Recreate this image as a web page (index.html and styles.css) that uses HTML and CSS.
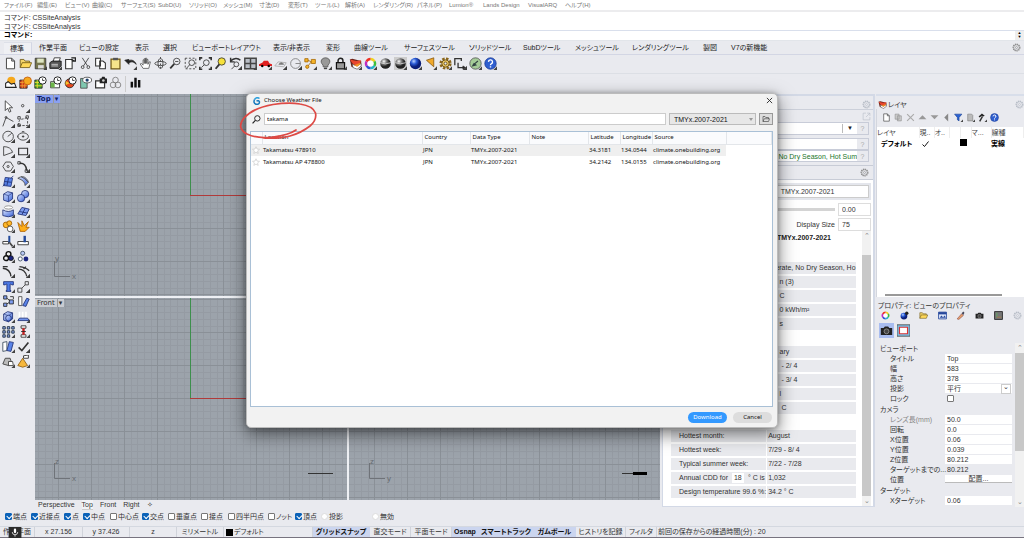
FILE: index.html
```html
<!DOCTYPE html>
<html lang="ja">
<head>
<meta charset="utf-8">
<title>Choose Weather File</title>
<link rel="stylesheet" href="styles.css">
</head>
<body>
<svg class="defs" aria-hidden="true">
  <defs>
    <radialGradient id="ball" cx=".35" cy=".3"><stop offset="0" stop-color="#fff"/><stop offset=".45" stop-color="#888"/><stop offset="1" stop-color="#222"/></radialGradient>
    <radialGradient id="blueball" cx=".35" cy=".3"><stop offset="0" stop-color="#bcd4ff"/><stop offset=".5" stop-color="#2a5bd6"/><stop offset="1" stop-color="#0a1e78"/></radialGradient>
    <linearGradient id="bluebox" x2="1" y2="1"><stop offset="0" stop-color="#dbe6ff"/><stop offset="1" stop-color="#3b63d8"/></linearGradient>
    <symbol id="tri" viewBox="0 0 16 16"><path d="M16 11.500V16H11.500z" fill="#444"/></symbol>
    <symbol id="page" viewBox="0 0 16 16"><path d="M3 1.500h6.500l3.500 3.500v9.500H3zM9.500 1.500V5H13" fill="#fff" stroke="#444" stroke-width="1.200"/></symbol>
    <symbol id="folder" viewBox="0 0 16 16"><path d="M1.500 13V3h4.500l1.500 2H13v2" fill="#f3d46a" stroke="#6d5613"/><path d="M1.500 13L4 7h11.500L13 13z" fill="#ffd95a" stroke="#6d5613"/></symbol>
    <symbol id="gear" viewBox="0 0 16 16"><circle cx="8" cy="8" r="6" fill="none" stroke="currentColor" stroke-width="2" stroke-dasharray="2.300 1.200"/><circle cx="8" cy="8" r="4.800" fill="none" stroke="currentColor"/><circle cx="8" cy="8" r="1.800" fill="none" stroke="currentColor"/></symbol>
    <symbol id="layer" viewBox="0 0 16 16"><path d="M1 3l3-1 11 3v6l-5 4-7-3z" fill="#6b2218"/><path d="M1 3l8 2 6-1-2 5-7 1z" fill="#e8452c"/><path d="M4 9l6 2 5-3v3l-5 4-5-2z" fill="#fff" stroke="#444" stroke-width=".7"/><path d="M6 10l8-3v2l-4 3z" fill="#f39224"/></symbol>
    <symbol id="help" viewBox="0 0 16 16"><circle cx="8" cy="8" r="7" fill="#2f5fd0" stroke="#1a3a96"/><path d="M5.500 6a2.500 2.500 0 1 1 3.500 2.300c-.8.500-1 .9-1 1.700M8 11.500v1.500" fill="none" stroke="#fff" stroke-width="1.700"/></symbol>
    <symbol id="camera" viewBox="0 0 16 16"><path d="M1 5h3.500L6 3h4l1.500 2H15v8.500H1z" fill="#222"/><circle cx="8" cy="9" r="3" fill="#444" stroke="#999"/></symbol>
    <symbol id="wheel" viewBox="0 0 16 16"><g fill="none" stroke-width="3"><path d="M8 2.500A5.500 5.500 0 0 1 12.800 5.300" stroke="#f1d21f"/><path d="M12.800 5.300a5.500 5.500 0 0 1 0 5.500" stroke="#3cbf3c"/><path d="M12.800 10.800A5.500 5.500 0 0 1 8 13.500" stroke="#25b5c9"/><path d="M8 13.500a5.500 5.500 0 0 1-4.800-2.700" stroke="#2a4fd8"/><path d="M3.200 10.800a5.500 5.500 0 0 1 0-5.500" stroke="#c22ac0"/><path d="M3.200 5.300A5.500 5.500 0 0 1 8 2.500" stroke="#ee3024"/></g><circle cx="8" cy="8" r="3.500" fill="#fff"/></symbol>
    <symbol id="clock" viewBox="0 0 16 16"><circle cx="10.500" cy="5.500" r="4.500" fill="#fff" stroke="#222" stroke-width="1.200"/><path d="M10.500 3v2.500H13" fill="none" stroke="#222"/></symbol>
    <symbol id="cube" viewBox="0 0 16 16"><path d="M2 5l5-3 6 1.500V11l-5 3.500-6-2z" fill="url(#bluebox)" stroke="#1b2c73"/><path d="M2 5l6 2 5-3.500M8 7v7.500" fill="none" stroke="#1b2c73" stroke-width=".7"/></symbol>
    <symbol id="star" viewBox="0 0 16 16"><path d="M8 1.500l2 4.600 5 .5-3.800 3.300 1.200 4.900L8 12.200l-4.400 2.600 1.200-4.900L1 6.600l5-.5z" fill="#fff" stroke="#b8b8b8"/></symbol>
  </defs>
</svg>

<nav class="menu" aria-label="メインメニュー">
  <a href="#">ファイル(F)</a><a href="#">編集(E)</a><a href="#">ビュー(V)</a><a href="#">曲線(C)</a><a href="#">サーフェス(S)</a><a href="#">SubD(U)</a><a href="#">ソリッド(O)</a><a href="#">メッシュ(M)</a><a href="#">寸法(D)</a><a href="#">変形(T)</a><a href="#">ツール(L)</a><a href="#">解析(A)</a><a href="#">レンダリング(R)</a><a href="#">パネル(P)</a><a href="#">Lumion®</a><a href="#">Lands Design</a><a href="#">VisualARQ</a><a href="#">ヘルプ(H)</a>
</nav>

<section class="command">
  <div class="history"><p>コマンド: CSSiteAnalysis</p><p>コマンド: CSSiteAnalysis</p></div>
  <div class="prompt"><label for="cmd">コマンド:</label><input id="cmd" type="text"><span class="spin">▲<br>▼</span></div>
</section>

<div class="tabs">
  <a href="#" class="on">標準</a><a href="#">作業平面</a><a href="#">ビューの設定</a><a href="#">表示</a><a href="#">選択</a><a href="#">ビューポートレイアウト</a><a href="#">表示/非表示</a><a href="#">変形</a><a href="#">曲線ツール</a><a href="#">サーフェスツール</a><a href="#">ソリッドツール</a><a href="#">SubDツール</a><a href="#">メッシュツール</a><a href="#">レンダリングツール</a><a href="#">製図</a><a href="#">V7の新機能</a>
  <svg class="ic gear"><use href="#gear"/></svg>
</div>

<div class="bar">
  <svg class="ic"><use href="#page"/></svg>
  <svg class="ic"><use href="#folder"/></svg>
  <svg class="ic" viewBox="0 0 16 16"><path d="M1.500 1.500h13v13h-13z" fill="#77774f" stroke="#333"/><path d="M4 2h8v5H4z" fill="#dfe6c4"/><path d="M5 10h7v4H5z" fill="#ddd"/><use href="#tri"/></svg>
  <svg class="ic" viewBox="0 0 16 16"><path d="M5 6l1.500-5H14l-2 5" fill="#fff" stroke="#222"/><path d="M1 7l3-2h11v6l-3 3H1z" fill="#555" stroke="#111"/><path d="M3 11h8M3 9h8" stroke="#ddd"/><use href="#tri"/></svg>
  <svg class="ic" viewBox="0 0 16 16"><path d="M2 3h8v11.500H2z" fill="#fff" stroke="#333" stroke-width="1.300"/><path d="M9 1h5v4h-4M9 3l4 2" fill="none" stroke="#222" stroke-width="1.500"/></svg>
  <svg class="ic k" viewBox="0 0 16 16"><path d="M4 1l6.500 10M12 1L5.500 11"/><circle cx="4.500" cy="12.500" r="1.700"/><circle cx="11.500" cy="12.500" r="1.700"/></svg>
  <svg class="ic" viewBox="0 0 16 16"><path d="M2 1.500h6V11H2zM7 5h4l3 2.500v7H7z" fill="#fff" stroke="#333" stroke-width="1.300"/></svg>
  <svg class="ic" viewBox="0 0 16 16"><path d="M2.500 2.500h11v12h-11z" fill="#f6e48a" stroke="#6d5613" stroke-width="1.500"/><path d="M5 1h6v3H5z" fill="#555"/></svg>
  <svg class="ic" viewBox="0 0 16 16"><path d="M1 4l5 5V7c4-2 6-1 9 2-2-5-6-6-9-4.500V3z" fill="#222" stroke="#222"/><use href="#tri"/></svg>
  <svg class="ic" viewBox="0 0 16 16"><path d="M5 14L1.500 8.500l1.500-.5 2 2V3.500h1.500V8 2H8v6-6.500h1.500V8 3H11v6l1.500-3h1.500L12 14z" fill="#fff" stroke="#555"/></svg>
  <svg class="ic k" viewBox="0 0 16 16"><ellipse cx="8" cy="8" rx="3" ry="6"/><ellipse cx="8" cy="8" rx="7" ry="2.500"/><path d="M8 0v16" stroke-dasharray="2 2"/></svg>
  <svg class="ic k" viewBox="0 0 16 16"><circle cx="9.500" cy="5.500" r="4"/><path d="M6.500 8.500L1.500 14" stroke-width="2.200"/><path d="M7.500 5.500h4"/></svg>
  <svg class="ic k" viewBox="0 0 16 16"><path d="M1.500 1.500h13v13h-13z" stroke-dasharray="2.500 2"/><circle cx="9.500" cy="7" r="3.500"/><path d="M7 9.500L3 14"/></svg>
  <svg class="ic k" viewBox="0 0 16 16"><path d="M1 4V1h3M12 1h3v3M15 12v3h-3M4 15H1v-3" stroke-width="2"/><circle cx="9" cy="7" r="3.500"/><path d="M6.500 9.500L3 13"/></svg>
  <svg class="ic" viewBox="0 0 16 16"><circle cx="9.500" cy="5.500" r="4.500" fill="#f6e13c" stroke="#333"/><path d="M6.500 9L2 14.500" stroke="#333" stroke-width="2.200"/></svg>
  <svg class="ic k" viewBox="0 0 16 16"><path d="M2 1v5h5M2 5c4-4 9-4 12-1" stroke-width="1.800"/><circle cx="9" cy="9" r="3"/><path d="M7 11l-4 4"/><use href="#tri"/></svg>
  <svg class="ic" viewBox="0 0 16 16"><path d="M1 1.500h14v13H1zM8 1v14M1 8h14" stroke="#444" stroke-width="1.800" fill="#b9bec6"/><use href="#tri"/></svg>
  <svg class="ic" viewBox="0 0 16 16"><path d="M0 9l4-2 2-2.500h5L13 8l3 1v2H0z" fill="#e02020"/><circle cx="4" cy="11" r="1.500"/><circle cx="12" cy="11" r="1.500"/><use href="#tri"/></svg>
  <svg class="ic k" viewBox="0 0 16 16"><path d="M1 11l4-5 10 1-3 5z" stroke="#aaa"/><path d="M6 9q3-4 6 0z" fill="#777" stroke="#777"/><use href="#tri"/></svg>
  <svg class="ic k" viewBox="0 0 16 16"><circle cx="8" cy="8" r="6" stroke="#777"/><path d="M8 8h6" stroke="#777"/><use href="#tri"/></svg>
  <svg class="ic" viewBox="0 0 16 16"><path d="M1 2h4v4H1zM9 3h5v5H9z" fill="#f5b429" stroke="#a76a08"/><path d="M5 4l4 2-5 6" stroke="#a76a08" fill="none"/><circle cx="4" cy="12" r="2" fill="#f5b429" stroke="#a76a08"/><use href="#tri"/></svg>
  <svg class="ic" viewBox="0 0 16 16"><path d="M5 10C0 5 4 1 8 1s8 4 3 9v2H5z" fill="#999" stroke="#555"/><path d="M6 13h4v2H6z" fill="#444"/><use href="#tri"/></svg>
  <svg class="ic" viewBox="0 0 16 16"><path d="M5 7V4.500a3 3 0 0 1 6 0V7" fill="none" stroke="#222" stroke-width="1.800"/><path d="M3 7h10v7.500H3z" fill="#999" stroke="#111" stroke-width="1.500"/><use href="#tri"/></svg>
  <svg class="ic" viewBox="0 0 16 16"><use href="#layer"/><use href="#tri"/></svg>
  <svg class="ic" viewBox="0 0 16 16"><use href="#wheel"/><use href="#tri"/></svg>
  <svg class="ic" viewBox="0 0 16 16"><circle cx="8" cy="8" r="6.500" fill="url(#ball)"/><path d="M1.500 7q6 3 13 0" stroke="#ddd" fill="none"/></svg>
  <svg class="ic pressed" viewBox="0 0 16 16"><circle cx="8" cy="8" r="6.500" fill="url(#ball)"/><path d="M1.500 7q6 3 13 0" stroke="#ddd" fill="none"/><use href="#tri"/></svg>
  <svg class="ic" viewBox="0 0 16 16"><circle cx="8" cy="8" r="7" fill="url(#blueball)"/><use href="#tri"/></svg>
  <svg class="ic" viewBox="0 0 16 16"><path d="M3 4l9-3v11z" fill="#f0a92c" stroke="#8a5a10"/><use href="#tri"/></svg>
  <svg class="ic" viewBox="0 0 16 16"><circle cx="8" cy="8" r="6" fill="none" stroke="#8a651a" stroke-width="3" stroke-dasharray="3 1.700"/><circle cx="8" cy="8" r="4.500" fill="#eac763" stroke="#5d430c"/><circle cx="8" cy="8" r="1.800" fill="#eee" stroke="#5d430c"/><use href="#tri"/></svg>
  <svg class="ic k" viewBox="0 0 16 16"><path d="M1 10V2h8v3M5 7v6h8" stroke-width="1.600"/><path d="M11 11l3 2-3 2z" fill="#222"/><use href="#tri"/></svg>
  <svg class="ic" viewBox="0 0 16 16"><circle cx="8" cy="8" r="7" fill="#a5cc98" stroke="#555"/><path d="M3 12l3-5 4 3z" fill="#344"/><path d="M5 10l6-5" stroke="#344" stroke-width="1.500"/><use href="#tri"/></svg>
  <svg class="ic" viewBox="0 0 16 16"><use href="#help"/><use href="#tri"/></svg>
</div>
<div class="bar second">
  <svg class="ic" viewBox="0 0 16 16"><circle cx="9" cy="6" r="5" fill="#f6a81c"/><path d="M2 14V9l3-2 4 3 4-1 2 5z" fill="#fff" stroke="#222" stroke-width="1.300"/></svg>
  <svg class="ic" viewBox="0 0 16 16"><path d="M1 5h9v10H1z" fill="#d43a1c" stroke="#222"/><path d="M4 5v10M7 5v10M1 8h9M1 12h9" stroke="#f0a030"/><circle cx="10.500" cy="6" r="4.800" fill="#f6a81c" stroke="#c05a10"/></svg>
  <svg class="ic" viewBox="0 0 16 16"><path d="M1 5h9v10H1z" fill="#47a32c" stroke="#222"/><path d="M4 5v10M1 8h9M1 12h9" stroke="#f4e22c"/><use href="#clock"/></svg>
  <svg class="ic" viewBox="0 0 16 16"><path d="M2 7v7.500h11V7z" fill="#fff" stroke="#222"/><path d="M2 8h5v6H2z" fill="#6cb54a"/><use href="#clock"/></svg>
  <svg class="ic" viewBox="0 0 16 16"><circle cx="7" cy="9" r="5.500" fill="#e8481c" stroke="#222"/><path d="M7 9L2 6v5z" fill="#f4c52c"/><use href="#clock"/></svg>
  <svg class="ic" viewBox="0 0 16 16"><path d="M2 3h8v12H2z" fill="#7fc7b0" stroke="#444"/><ellipse cx="10" cy="5" rx="5.500" ry="3.500" fill="#fff" stroke="#444"/><circle cx="10" cy="5" r="2" fill="#1a3c6a"/></svg>
  <svg class="ic" viewBox="0 0 16 16"><path d="M2 6h11v8.500H2z" fill="#fff" stroke="#333" stroke-width="1.500"/><path d="M7 3h2l1-2h3l1 2h2v6H7z" fill="#222"/><circle cx="11.500" cy="5.500" r="1.600" fill="#ccc"/></svg>
  <svg class="ic k" viewBox="0 0 16 16"><g stroke="#777"><circle cx="8" cy="5" r="3.500"/><circle cx="5" cy="11" r="3.500"/><circle cx="11" cy="11" r="3.500"/></g></svg>
  <span class="sep"></span>
  <svg class="ic" viewBox="0 0 16 16"><path d="M2 7h3v7H2zM6.500 2h3v12h-3zM11 5h3v9h-3z" fill="#111"/></svg>
</div>

<main class="work">
  <aside class="tools">
    <svg class="ic" viewBox="0 0 16 16"><path d="M4 1v12l3-3 2 5 2-1-2-4.500h4z" fill="#fff" stroke="#333"/></svg>
    <svg class="ic k" viewBox="0 0 16 16"><circle cx="7" cy="7" r="1.500"/><use href="#tri"/></svg>
    <svg class="ic k" viewBox="0 0 16 16"><path d="M1 14L5 3l9 5"/><circle cx="5" cy="3" r="1.200"/><use href="#tri"/></svg>
    <svg class="ic k" viewBox="0 0 16 16"><path d="M2 13C2 1 7 8 13 2M2 13h11V4"  stroke-dasharray="3 1.500"/><path d="M1 2h3v3H1zM11 1h3v3h-3zM1 11h3v3H1z"/><use href="#tri"/></svg>
    <svg class="ic k" viewBox="0 0 16 16"><circle cx="7.500" cy="8" r="6.500"/><path d="M7 8l5-4"/><use href="#tri"/></svg>
    <svg class="ic k" viewBox="0 0 16 16"><ellipse cx="7.500" cy="8" rx="6.500" ry="4.500"/><path d="M6 8h3M7.500 6.500v3M6 2h3M1 7v2"/><use href="#tri"/></svg>
    <svg class="ic k" viewBox="0 0 16 16"><path d="M2 2v11l11-4M2 2q9 0 11 7"/><use href="#tri"/></svg>
    <svg class="ic k" viewBox="0 0 16 16"><path d="M2 4h11v8H2z" stroke-width="1.400"/><use href="#tri"/></svg>
    <svg class="ic k" viewBox="0 0 16 16"><path d="M4.500 2.500h6L14 8l-3.500 5.500h-6L1 8z"/><circle cx="7.500" cy="8" r="1.300"/><use href="#tri"/></svg>
    <svg class="ic k" viewBox="0 0 16 16"><path d="M3 4q8-1 9 9" stroke-width="1.800"/><path d="M1 2h3v3H1zM10 12h3v3h-3z"/><use href="#tri"/></svg>
    <svg class="ic" viewBox="0 0 16 16"><path d="M2 13L4 3l9 1-2 10z" fill="#5b84e8" stroke="#1b2c73"/><path d="M3 8l9 1M8 4L6 13" stroke="#1b2c73"/><path d="M1 14l3-3M14 1l-3 3" stroke="#1b2c73"/><use href="#tri"/></svg>
    <svg class="ic" viewBox="0 0 16 16"><path d="M1 4q6-4 10 0 3 3 3 5l-4 4q0-6-9-9z" fill="url(#bluebox)" stroke="#444"/><path d="M5 2q5 2 9 7" fill="none" stroke="#444"/><use href="#tri"/></svg>
    <svg class="ic" viewBox="0 0 16 16"><use href="#cube"/><use href="#tri"/></svg>
    <svg class="ic" viewBox="0 0 16 16"><circle cx="10" cy="5" r="4.500" fill="url(#bluebox)" stroke="#1b2c73"/><circle cx="5" cy="10" r="4.500" fill="url(#bluebox)" stroke="#1b2c73"/><use href="#tri"/></svg>
    <svg class="ic" viewBox="0 0 16 16"><ellipse cx="8" cy="3" rx="5" ry="2" fill="#fff" stroke="#888"/><path d="M1 6q7 4 13 0v7q-6 3-13 0z" fill="url(#bluebox)" stroke="#1b2c73"/><use href="#tri"/></svg>
    <svg class="ic" viewBox="0 0 16 16"><path d="M1 11l5-8 9 2-4 8z" fill="#7d9cf0" stroke="#1b2c73"/><path d="M3 8l10 2M10 4l-4 8" stroke="#1b2c73"/><use href="#tri"/></svg>
    <svg class="ic" viewBox="0 0 16 16"><circle cx="5" cy="6" r="3.500" fill="#ffb82a" stroke="#9c5d00"/><circle cx="9" cy="4" r="3" fill="#ffb82a" stroke="#9c5d00"/><circle cx="10" cy="11" r="3.500" fill="#fff" stroke="#444"/><use href="#tri"/></svg>
    <svg class="ic" viewBox="0 0 16 16"><path d="M1 3l5 5 0-7 3 6 5-5-3 7 4 0-5 5H4z" fill="#ffae19" stroke="#a85c00"/></svg>
    <svg class="ic" viewBox="0 0 16 16"><path d="M1 8h7v3H1z" fill="#fff" stroke="#222"/><path d="M9 1v8" stroke="#234a9c" stroke-width="2.500" fill="none"/><path d="M9 9l4 5" stroke="#444" stroke-width="2"/><use href="#tri"/></svg>
    <svg class="ic" viewBox="0 0 16 16"><path d="M1 8h13v4H1z" fill="#fff" stroke="#222"/><path d="M8 1v8h3V1" fill="#234a9c"/></svg>
    <svg class="ic" viewBox="0 0 16 16"><circle cx="8" cy="5" r="3" fill="#eee" stroke="#111" stroke-width="1.700"/><circle cx="5" cy="10" r="3" fill="#eee" stroke="#111" stroke-width="1.700"/><circle cx="11" cy="10" r="3" fill="#1a237e" stroke="#111"/><use href="#tri"/></svg>
    <svg class="ic" viewBox="0 0 16 16"><circle cx="7" cy="4" r="2.500" fill="#b9c8f5" stroke="#345"/><circle cx="4" cy="11" r="2.500" fill="#fff" stroke="#345"/><circle cx="11" cy="11" r="3" fill="#1a237e"/></svg>
    <svg class="ic k" viewBox="0 0 16 16"><path d="M1 4q9 1 10 10M1 2h6" stroke-width="1.700"/><use href="#tri"/></svg>
    <svg class="ic k" viewBox="0 0 16 16"><path d="M2 5q8 0 10 9M3 2q8 1 12 5M8 5l3-3" stroke-width="1.600"/><use href="#tri"/></svg>
    <svg class="ic" viewBox="0 0 16 16"><path d="M2 2h12v4h-2l-1-1h-1v8h1v1H5v-1h1V5H5L4 6H2z" fill="#4e7ae6" stroke="#1b2c73"/><use href="#tri"/></svg>
    <svg class="ic k" viewBox="0 0 16 16"><path d="M1 10h5v5H1zM10 2h4v4h-4zM6 10l4-4" /><use href="#tri"/></svg>
    <svg class="ic" viewBox="0 0 16 16"><path d="M2 1h4v4H2zM2 10h4v4H2zM9 6h5v5H9z" fill="#7d9cf0" stroke="#222"/><path d="M6 4l4 3M6 11l3-2M10 2h4v3" stroke="#222" fill="none"/></svg>
    <svg class="ic" viewBox="0 0 16 16"><path d="M2 2h4v11H2z" fill="#fff" stroke="#444"/><path d="M7 13l5-9 3 1-4 9z" fill="#5b84e8" stroke="#1b2c73"/></svg>
    <svg class="ic" viewBox="0 0 16 16"><use href="#cube"/><circle cx="8" cy="10" r="3.500" fill="url(#bluebox)" stroke="#1b2c73"/><use href="#tri"/></svg>
    <svg class="ic" viewBox="0 0 16 16"><path d="M3 2v8M7 2v8M11 2v8" stroke="#fff" stroke-width="2"/><path d="M1 13l2-3h10l2 3z" fill="#6f92ee" stroke="#1b2c73"/><use href="#tri"/></svg>
    <svg class="ic" viewBox="0 0 16 16"><path d="M1 2h3v3H1zM6.500 2h3v3h-3zM12 2h3v3h-3zM1 7h3v3H1zM6.500 7h3v3h-3zM12 7h3v3h-3zM1 12h3v3H1zM6.500 12h3v3h-3z" fill="#8fa6ea" stroke="#123"/><use href="#tri"/></svg>
    <svg class="ic" viewBox="0 0 16 16"><path d="M5 1h6v3H5zM5 12h6v3H5z" fill="#fff" stroke="#222"/><path d="M8 4v8" stroke="#c61f1f" stroke-width="3"/><path d="M5 8h6" stroke="#222"/><use href="#tri"/></svg>
    <svg class="ic" viewBox="0 0 16 16"><path d="M1 3l5-1v11l-5 1z" fill="#fff" stroke="#345"/><path d="M6 13l3-11 5 1-3 11z" fill="#5b84e8" stroke="#1b2c73"/><use href="#tri"/></svg>
    <svg class="ic k" viewBox="0 0 16 16"><path d="M2 9l4 4 8-10" stroke-width="2"/><use href="#tri"/></svg>
    <svg class="ic" viewBox="0 0 16 16"><path d="M1 11l3-7h6l2 6-4 3z" fill="#bbb" stroke="#333"/><path d="M8 8h5l1 5H8z" fill="#fff" stroke="#333"/><use href="#tri"/></svg>
    <svg class="ic" viewBox="0 0 16 16"><path d="M1 13l6-9 6 9-6 2z" fill="#f6b73c" stroke="#8a5a10"/><path d="M8 1l6-1v4H8z" fill="#fff" stroke="#222"/><use href="#tri"/></svg>
  </aside>

  <div class="center">
    <div class="views">
      <section class="view top">
        <button type="button" class="vlabel active">Top<span>▾</span></button>
        <svg class="canvas"><path d="M155.500 0V101" stroke="#3d8f4c"/><path d="M155 101.500H311" stroke="#b03a3a"/><path d="M19.500 167V182.500H35" stroke="#6f7379" fill="none"/><text x="20" y="167">y</text><text x="37" y="185">x</text></svg>
      </section>
      <section class="view"><svg class="canvas"></svg></section>
      <section class="view front">
        <button type="button" class="vlabel">Front<span>▾</span></button>
        <svg class="canvas"><path d="M155.500 0V100" stroke="#3d8f4c"/><path d="M155 100.500H311" stroke="#b03a3a"/><path d="M19.500 165V180.500H35" stroke="#6f7379" fill="none"/><text x="20" y="166">z</text><text x="37" y="183">x</text><path d="M273 175.500h25" stroke="#333"/></svg>
      </section>
      <section class="view right"><svg class="canvas"><path d="M20.500 165V180.500H36" stroke="#6f7379" fill="none"/><text x="21" y="166">z</text><text x="38" y="183">y</text><path d="M273 175.500h12" stroke="#333"/><path d="M284 175.500h14" stroke="#000" stroke-width="3"/></svg></section>
    </div>
    <div class="vtabs"><a href="#">Perspective</a><a href="#" class="on">Top</a><a href="#">Front</a><a href="#">Right</a><span>✧</span></div>
  </div>

  <aside class="climate">
    <div class="crow end"><svg class="ic gear pale"><use href="#gear"/></svg></div>
    <div class="crow end line"><svg class="ic pale" viewBox="0 0 16 16"><path d="M7 2H2v12h12V9M9 2h5v5M14 2L7 9" fill="none" stroke="currentColor"/></svg></div>
    <div class="field"><div class="box"><span class="drop">▼</span></div><b class="q">?</b></div>
    <div class="field two"><div class="box"></div><b class="q">?</b></div>
    <div class="field three"><div class="box">Temperate, No Dry Season, Hot Sum</div><b class="q">?</b></div>
    <div class="crow end gears"><svg class="ic gear"><use href="#gear"/></svg></div>
    <div class="white">
      <div class="name"><input type="text" aria-label="名前" value="00_TMYx.2007-2021"></div>
      <div class="slide"><input type="range" aria-label="回転" value="100"><input class="num" type="text" aria-label="値" value="0.00"></div>
      <div class="slide"><label for="ds">Display Size</label><input class="num" id="ds" type="text" value="75"></div>
      <div class="report">
        <div class="sheet">
          <h2>478910_TMYx.2007-2021</h2>
          <table>
            <tr><td></td><td>perate, No Dry Season, Ho</td></tr>
            <tr><td></td><td class="s">n (3)</td></tr>
            <tr><td></td><td class="s">C</td></tr>
            <tr><td></td><td class="s">0 kWh/m²</td></tr>
            <tr><td></td><td class="s">s</td></tr>
          </table>
          <table>
            <tr><td></td><td class="s">ary</td></tr>
            <tr><td></td><td class="s">&nbsp;- 2/ 4</td></tr>
            <tr><td></td><td class="s">&nbsp;- 3/ 4</td></tr>
            <tr><td></td><td class="s">l</td></tr>
            <tr><td></td><td class="s">&nbsp;C</td></tr>
          </table>
          <table>
            <tr><td>Hottest month:</td><td>August</td></tr>
            <tr><td>Hottest week:</td><td>7/29 - 8/ 4</td></tr>
            <tr><td>Typical summer week:</td><td>7/22 - 7/28</td></tr>
            <tr><td>Annual CDD for <input type="text" aria-label="Annual CDD" value="18"> ° C is</td><td>1,032</td></tr>
            <tr><td>Design temperature 99.6 %:</td><td>34.2 ° C</td></tr>
          </table>
        </div>
        <div class="scroll"><span>⌃</span><i></i><span>⌄</span></div>
      </div>
    </div>
  </aside>

  <aside class="side">
    <div class="ltab"><a href="#"><svg class="ic"><use href="#layer"/></svg>レイヤ</a><svg class="ic gear pale"><use href="#gear"/></svg></div>
    <div class="layers">
      <div class="lbar">
        <svg class="ic"><use href="#page"/></svg>
        <svg class="ic" viewBox="0 0 16 16"><path d="M2 2h7v9H2zM6 5h7v9H6z" fill="#ccc" stroke="#888"/></svg>
        <svg class="ic" viewBox="0 0 16 16"><path d="M2 2l12 12M14 2L2 14" stroke="#aaa" stroke-width="2"/></svg>
        <svg class="ic" viewBox="0 0 16 16"><path d="M1 11l7-7 7 7z" fill="#999"/></svg>
        <svg class="ic" viewBox="0 0 16 16"><path d="M1 4l7 7 7-7z" fill="#999"/></svg>
        <svg class="ic" viewBox="0 0 16 16"><path d="M11 1L4 8l7 7z" fill="#888"/></svg>
        <svg class="ic" viewBox="0 0 16 16"><path d="M1 2h13L9 8v6l-3-2V8z" fill="#2b62d4" stroke="#123a8c"/><use href="#tri"/></svg>
        <svg class="ic" viewBox="0 0 16 16"><path d="M3 2h7l2 2v10H3z" fill="#bbb" stroke="#777"/><use href="#tri"/></svg>
        <svg class="ic" viewBox="0 0 16 16"><path d="M1 6l6-5 5 4-3 1-2-1-4 3z" fill="#222"/><path d="M8 6L3 15" stroke="#333" stroke-width="2.500"/><use href="#tri"/></svg>
        <svg class="ic"><use href="#help"/></svg>
      </div>
      <table class="ltable">
        <tr><th>レイヤ</th><th>現..</th><th>オ..</th><th></th><th></th><th>マ...</th><th>線種</th></tr>
        <tr><td>デフォルト</td><td><svg class="tick" viewBox="0 0 16 16"><path d="M2 9l4 4 8-10" fill="none" stroke="#111" stroke-width="2"/></svg></td><td></td><td></td><td><i class="sw"></i></td><td></td><td>実線</td></tr>
      </table>
      <div class="hscroll"></div>
    </div>
    <section class="props">
      <h2>プロパティ: ビューのプロパティ</h2>
      <div class="ptabs">
        <svg class="ic"><use href="#wheel"/></svg>
        <svg class="ic" viewBox="0 0 16 16"><circle cx="7" cy="9" r="6" fill="url(#blueball)"/><circle cx="12" cy="4" r="3" fill="#222"/></svg>
        <svg class="ic"><use href="#folder"/></svg>
        <svg class="ic" viewBox="0 0 16 16"><path d="M1 2h14v12H1z" fill="#dfe8fa" stroke="#26479c" stroke-width="1.500"/><path d="M1 2h14v4H1z" fill="#26479c"/><path d="M3 12l3-4 3 3 3-3 2 4z" fill="#26479c"/></svg>
        <svg class="ic" viewBox="0 0 16 16"><path d="M2 14l8-9 3 3-8 7z" fill="#e6a06a" stroke="#844"/><path d="M10 4l3-3 2 2-2 4z" fill="#445"/></svg>
        <svg class="ic"><use href="#camera"/></svg>
        <svg class="ic" viewBox="0 0 16 16"><path d="M1 1h14v14H1z" fill="#777" stroke="#222" stroke-width="1.500"/><path d="M5 3v8h8" stroke="#5c5" fill="none"/><path d="M5 11h8" stroke="#d44"/></svg>
        <svg class="ic gear pale"><use href="#gear"/></svg>
      </div>
      <div class="kinds"><button type="button" class="on" aria-label="カメラ"><svg class="ic"><use href="#camera"/></svg></button><button type="button" aria-label="ビュー"><svg class="ic" viewBox="0 0 16 16"><path d="M0 1h16v14H0z" fill="#7cc3ea" stroke="#444"/><path d="M3 4h10v8H3z" fill="#fff" stroke="#d33" stroke-width="1.500"/></svg></button></div>
      <div class="pbody">
        <div class="plist">
          <h3>ビューポート</h3>
          <div class="p"><label for="f1">タイトル</label><input id="f1" value="Top"></div>
          <div class="p"><label for="f2">幅</label><input id="f2" value="583"></div>
          <div class="p"><label for="f3">高さ</label><input id="f3" value="378"></div>
          <div class="p"><label for="f4">投影</label><span class="pick"><select id="f4"><option>平行</option></select></span></div>
          <div class="p"><label for="f5">ロック</label><input id="f5" class="ck" type="checkbox"></div>
          <h3>カメラ</h3>
          <div class="p"><label for="f6" class="dim">レンズ長(mm)</label><input id="f6" value="50.0"></div>
          <div class="p"><label for="f7">回転</label><input id="f7" value="0.0"></div>
          <div class="p"><label for="f8">X位置</label><input id="f8" value="0.06"></div>
          <div class="p"><label for="f9">Y位置</label><input id="f9" value="0.039"></div>
          <div class="p"><label for="f10">Z位置</label><input id="f10" value="80.212"></div>
          <div class="p"><label for="f11">ターゲットまでの...</label><input id="f11" class="ro" value="80.212" readonly></div>
          <div class="p"><span>位置</span><button type="button">配置...</button></div>
          <h3>ターゲット</h3>
          <div class="p"><label for="f12">Xターゲット</label><input id="f12" value="0.06"></div>
        </div>
        <div class="scroll short"><span>⌃</span><i></i><span>⌄</span></div>
      </div>
    </section>
  </aside>
</main>

<div class="osnap">
  <label><input type="checkbox" checked>端点</label><label><input type="checkbox" checked>近接点</label><label><input type="checkbox" checked>点</label><label><input type="checkbox" checked>中点</label><label><input type="checkbox">中心点</label><label><input type="checkbox" checked>交点</label><label><input type="checkbox">垂直点</label><label><input type="checkbox">接点</label><label><input type="checkbox">四半円点</label><label><input type="checkbox">ノット</label><label><input type="checkbox" checked>頂点</label><label><input type="radio" name="o">投影</label><label><input type="radio" name="o">無効</label>
</div>

<footer class="status">
  <span class="cp">作業平面<svg class="mic" viewBox="0 0 14 12"><path d="M0 0h14v12H0z" fill="#2b2b2b"/><path d="M7 3v2.500" stroke="#fff" stroke-width="2.500" stroke-linecap="round"/><path d="M4 5.500a3 3 0 0 0 6 0M7 8.500v2" stroke="#fff" stroke-width=".8" fill="none"/></svg></span><span>x 27.156</span><span>y 37.426</span><span>z</span><span>ミリメートル</span><span class="def"><i class="sw"></i>デフォルト</span><b>グリッドスナップ</b><span>直交モード</span><span>平面モード</span><b>Osnap</b><b>スマートトラック</b><b>ガムボール</b><span>ヒストリを記録</span><span>フィルタ</span><span class="last">前回の保存からの経過時間(分) : 20</span>
</footer>

<div class="dialog" role="dialog" aria-labelledby="dt">
  <header><svg class="logo" viewBox="0 0 16 16"><path d="M13 3Q7-1 3 5" stroke="#2ba0dd" stroke-width="3" fill="none"/><path d="M3 5Q0 12 6 14.500q7 1 7-4.500Q12 6 7 8" stroke="#1779bd" stroke-width="3" fill="none"/></svg><h1 id="dt">Choose Weather File</h1><button type="button" class="x" aria-label="閉じる"><svg viewBox="0 0 8 8"><path d="M1 1l6 6M7 1L1 7" stroke="#222"/></svg></button></header>
  <div class="search">
    <label for="q" aria-label="検索"><svg viewBox="0 0 16 16"><circle cx="9.500" cy="6" r="4.800" fill="none" stroke="#222" stroke-width="1.700"/><path d="M6 9.500L1 15" stroke="#222" stroke-width="2"/></svg></label>
    <input id="q" type="text" value="takama">
    <span class="combo"><select aria-label="期間"><option>TMYx.2007-2021</option></select></span>
    <button type="button" class="open" aria-label="開く"><svg viewBox="0 0 16 16"><path d="M2 13V3h4l1.500 2H13v3M2 13l2.500-5.500H15L13 13z" fill="none" stroke="#444" stroke-width="1.300"/></svg></button>
  </div>
  <div class="list">
    <table>
      <colgroup><col class="c1"><col class="c2"><col class="c3"><col class="c4"><col class="c4"><col class="c5"><col class="c5"><col class="c6"><col></colgroup>
      <thead><tr><th></th><th>Location</th><th>Country</th><th>Data Type</th><th>Note</th><th>Latitude</th><th>Longitude</th><th>Source</th><th></th></tr></thead>
      <tbody>
        <tr class="sel"><td><svg class="star"><use href="#star"/></svg></td><td>Takamatsu 478910</td><td>JPN</td><td>TMYx.2007-2021</td><td></td><td>34.3181</td><td>134.0544</td><td>climate.onebuilding.org</td><td class="blank"></td></tr>
        <tr><td><svg class="star"><use href="#star"/></svg></td><td>Takamatsu AP 478800</td><td>JPN</td><td>TMYx.2007-2021</td><td></td><td>34.2142</td><td>134.0155</td><td>climate.onebuilding.org</td><td class="blank"></td></tr>
      </tbody>
    </table>
  </div>
  <div class="actions"><button type="button" class="go">Download</button><button type="button">Cancel</button></div>
  <svg class="mark" viewBox="0 0 80 42"><path d="M57 28Q50 33 34 35Q18 37 8 32Q-3 26 5 16Q14 6 34 2.500Q50 0 61 2Q74 4 76.500 11Q78 18 71 24Q62 31 51 34Q40 37 24 36" fill="none" stroke="#dd4a45" stroke-width="1.700" stroke-linecap="round"/></svg>
</div>
</body>
</html>
```
FILE: styles.css
```css
* { box-sizing: border-box; }
body {
  margin: 0;
  height: 100vh;
  display: flex;
  flex-direction: column;
  overflow: hidden;
  background: #e9eaef;
  color: #333;
  font-family: "Liberation Sans", "Noto Sans CJK JP", sans-serif;
  font-size: 7px;
  line-height: 9px;
  font-feature-settings: "palt";
  position: relative;
}
a { color: inherit; text-decoration: none; white-space: nowrap; }
p, h1, h2, h3 { margin: 0; font-weight: normal; font-size: inherit; }
button, input, select { font: inherit; color: inherit; margin: 0; padding: 0; border: 0; min-width: 0; font-feature-settings: inherit; }
input[type="text"] { background: #fff; }
table { border-collapse: collapse; border-spacing: 0; }
.defs { position: absolute; width: 0; height: 0; }
.ic { width: 13px; height: 13px; flex: none; display: block; }
.k { fill: none; stroke: #333; }
.gear { width: 9px; height: 9px; color: #888; }
.pale { color: #b4bac4; width: 9px; height: 9px; }
.sw { display: inline-block; width: 7px; height: 7px; background: #000; }

.menu {
  display: grid;
  grid-template-columns: 33px 28px 27px 29px 37px 31px 34px 36px 29px 27px 30px 28px 44px 32px 34px 45px 37px 1fr;
  padding-left: 4px;
  height: 10px;
  flex: none;
  line-height: 11px;
  background: #fff;
  color: #777;
  font-size: 6px;
}
.command { border-top: 2px solid #ececee; background: #fff; flex: none; }
.history { padding: 1px 4px 0; height: 19px; border-bottom: 1px solid #d9dfec; }
.prompt { display: flex; padding-left: 4px; height: 9px; color: #000; font-weight: bold; line-height: 8px; }
.prompt input { flex: 1; background: none; }
.spin { width: 9px; font-size: 4px; line-height: 4px; text-align: center; background: #eee; }

.tabs {
  display: grid;
  grid-template-columns: 29px 40px 56px 28px 29px 81px 53px 28px 50px 65px 54px 52px 57px 71px 28px 1fr 12px;
  padding-left: 10px;
  height: 15px;
  flex: none;
  align-items: end;
  border-top: 1px solid #e2e5ea;
  border-bottom: 1px solid #d3d6e4;
  line-height: 12px;
  color: #222;
}
.tabs .on { background: #eff0f4; border-right: 1px solid #d3d6e4; border-top: 1px solid #dde0e8; margin: 0 7px 0 -6px; padding-left: 6px; line-height: 11px; }
.tabs .gear { align-self: center; }
.bar { display: flex; gap: 2px; padding: 2px 4px; height: 19px; flex: none; border-bottom: 1px solid #dcdfe5; }
.second { height: 20px; border-bottom: 0; }
.sep { width: 1px; background: #ccc; margin: 0 1px; }
.pressed { background: #ccc; }

.work { display: flex; flex: 1; min-height: 0; }
.tools { width: 34px; display: grid; grid-template-columns: 13px 13px; grid-auto-rows: 13px; gap: 2px; padding: 4px 2px; flex: none; border-top: 2px solid #dbe0ea; align-content: start; }
.center { flex: 1; display: flex; flex-direction: column; min-width: 0; margin-left: 1px; }
.views { flex: 1; min-height: 0; display: grid; grid-template-columns: 1fr 1fr; grid-template-rows: 1fr 1fr; gap: 2px; background: #eef0f4; }
.view {
  position: relative;
  overflow: hidden;
  background-color: #9ca3ab;
  background-image:
    linear-gradient(90deg, #8a9097 1px, transparent 1px),
    linear-gradient(#8a9097 1px, transparent 1px),
    linear-gradient(90deg, transparent 7px, #959ba3 7px 8px, transparent 8px 13px, #959ba3 13px 14px, transparent 14px 20px, #959ba3 20px 21px, transparent 21px 27px, #959ba3 27px 28px, transparent 28px),
    linear-gradient(transparent 7px, #959ba3 7px 8px, transparent 8px 13px, #959ba3 13px 14px, transparent 14px 20px, #959ba3 20px 21px, transparent 21px 27px, #959ba3 27px 28px, transparent 28px);
  background-size: 33px 33px;
  background-position: 23px 2px;
}
.front { background-position: 23px 1px; }
.right { background-position: 25px 1px; }
.canvas { position: absolute; inset: 0; width: 100%; height: 100%; }
.canvas text { font-size: 8px; fill: #666b71; }
.vlabel { position: absolute; z-index: 1; left: 0; top: 1px; height: 8px; padding: 0 2px; line-height: 8px; background: #c9ccd1; font-family: "DejaVu Sans", sans-serif; }
.vlabel span { border-left: 1px solid #999; margin-left: 2px; padding-left: 1px; }
.active { background: #8aa0f0; color: #102060; font-weight: bold; }
.vtabs { display: flex; gap: 7px; padding: 0 3px; height: 10px; line-height: 10px; flex: none; }
.vtabs .on { background: #f2f3f6; border-bottom: 1px solid #ccc; }

.climate { width: 213px; flex: none; margin: 0 0 3px 2px; display: flex; flex-direction: column; border: 1px solid #d3d9e6; border-width: 2px 2px 1px 1px; }
.crow { display: flex; height: 13px; align-items: center; padding-right: 2px; flex: none; padding-top: 3px; }
.end { justify-content: flex-end; }
.line { border-top: 1px solid #ccd0da; height: 13px; padding-top: 0; }
.gears { height: 15px; padding: 0 4px 0 0; border-bottom: 1px solid #c8ccd6; border-top: 1px solid #c8ccd6; }
.field { display: flex; height: 13px; margin: 0 4px 1px 8px; flex: none; border: 1px solid #c8ccd8; }
.two { margin-top: 2px; margin-bottom: 0; height: 12px; }
.three { height: 12px; margin-bottom: 3px; }
.box { flex: 1; background: #fff; display: flex; justify-content: flex-end; align-items: center; overflow: hidden; white-space: nowrap; color: #23752a; }
.drop { border-left: 1px solid #bbb; padding: 0 4px; color: #222; font-size: 6px; }
.q { width: 11px; text-align: center; font-weight: normal; color: #aaa; line-height: 11px; }
.white { background: #fff; flex: 1; display: flex; flex-direction: column; min-height: 0; }
.name { margin: 3px 2px 1px 8px; padding: 2px; background: #e4e6ec; flex: none; }
.name input { width: 100%; height: 13px; padding-left: 95px; border: 1px solid #ccc; }
.slide { display: flex; justify-content: flex-end; align-items: center; gap: 3px; padding-right: 2px; margin-top: 2px; flex: none; }
.slide input[type="range"] { appearance: none; width: 155px; height: 3px; background: #d4d4d4; }
.slide input[type="range"]::-webkit-slider-thumb { appearance: none; width: 1px; height: 3px; }
.slide .num { width: 33px; height: 13px; padding-left: 3px; border: 1px solid #ddd; }
.report { display: flex; flex: 1; min-height: 0; padding: 0 2px 0 8px; }
.sheet { flex: 1; overflow: hidden; }
.sheet h2 { font-weight: bold; color: #222; padding: 2px 31px 0 0; text-align: right; height: 29px; }
.sheet table { width: 185px; margin-bottom: 14px; border-collapse: separate; border-spacing: 0 2px; margin-top: 0; }
.sheet table + table { margin-top: -2px; }
.sheet td { height: 12px; padding: 0 0 0 8px; background: #e9eaee; width: 92px; white-space: nowrap; line-height: 10px; border-right: 1px solid #fff; }
.sheet td + td { padding-left: 1px; border-right: 0; max-width: 92px; }
.sheet tr:first-child td:empty + td:not(.s) { padding-left: 8px; }
.sheet td + td.s { padding-left: 16px; }
.sheet td input { width: 12px; height: 10px; padding-left: 2px; margin: 0 2px; }
.scroll { width: 9px; background: #f1f1f1; display: flex; flex-direction: column; flex: none; text-align: center; color: #888; }
.scroll span { height: 10px; }
.scroll i { flex: 1; background: #c8c8c8; margin-top: 14px; }

.side { width: 148px; flex: none; margin-left: 1px; display: flex; flex-direction: column; }
.ltab { display: flex; justify-content: space-between; align-items: center; height: 15px; padding-top: 3px; border-top: 2px solid #d8deea; flex: none; }
.ltab a { display: flex; align-items: center; gap: 1px; padding: 0 10px 0 2px; }
.ltab .ic { width: 9px; height: 9px; }
.layers { flex: none; height: 188px; background: #fff; border-left: 1px solid #d3d6de; display: flex; flex-direction: column; }
.lbar { display: flex; gap: 3px; padding: 4px 5px; background: #e9eaef; height: 18px; }
.lbar .ic, .ptabs .ic { width: 9px; height: 9px; }
.ltable { width: 100%; table-layout: fixed; color: #000; }
.ltable th { font-weight: normal; text-align: left; height: 11px; padding: 0; border-right: 1px solid #eee; white-space: nowrap; overflow: hidden; color: #444; }
.ltable th:first-child { width: 42px; }
.ltable th:nth-child(2), .ltable th:nth-child(3) { width: 15px; }
.ltable th:nth-child(4), .ltable th:nth-child(5) { width: 11px; }
.ltable th:nth-child(6) { width: 20px; }
.ltable td { padding: 1px 0 0; white-space: nowrap; font-weight: bold; }
.ltable td:first-child { padding-left: 4px; }
.tick { display: block; width: 9px; height: 8px; margin-left: 2px; }
.hscroll { margin: auto 22px 1px 8px; height: 2px; background: #999; }
.props { flex: 1; min-height: 0; display: flex; flex-direction: column; padding: 4px 0 0 2px; }
.props h2 { height: 9px; flex: none; }
.ptabs { display: flex; justify-content: space-between; padding: 1px 2px 1px 3px; flex: none; }
.kinds { display: flex; gap: 2px; padding: 2px 1px; flex: none; }
.kinds button { width: 15px; height: 15px; padding: 1px; background: none; }
.kinds .on { background: #a9bdf0; }
.pbody { flex: 1; display: flex; min-height: 0; margin: 3px 0; overflow: hidden; }
.plist { flex: 1; overflow: hidden; }
.plist h3 { height: 11px; padding: 1px 2px; }
.p { display: grid; grid-template-columns: 55px 1fr; height: 10px; padding-left: 12px; margin-right: 3px; white-space: nowrap; }
.p input, .p select { height: 9px; width: 100%; padding-left: 2px; background: #fff; line-height: 9px; }
.p .ro { background: none; }
.p button { height: 8px; background: #fff; border-bottom: 1px solid #bbb; line-height: 8px; }
.pick { position: relative; }
.p select { appearance: none; display: block; }
.pick::after { content: "⌄"; position: absolute; right: 1px; top: 0; width: 8px; height: 8px; border: 1px solid #ccc; line-height: 4px; text-align: center; }
.p .ck { width: 7px; height: 7px; margin: 1px 2px; padding: 0; }
.dim { color: #888; }
.short i { flex: 0 0 98px; margin: 0 0 auto; }

.osnap {
  display: grid;
  grid-template-columns: 26px 33px 19px 27px 32px 26px 33px 27px 40px 27px 26px 51px 1fr;
  padding: 0 0 3px 5px;
  height: 16px;
  align-items: center;
  flex: none;
}
.osnap label { display: flex; gap: 1px; align-items: center; white-space: nowrap; }
input[type="checkbox"], input[type="radio"] { appearance: none; width: 7px; height: 7px; background: #fff; border: 1px solid #777; border-radius: 1px; flex: none; }
input[type="radio"] { border-color: #ddd; border-radius: 50%; }
input[type="checkbox"]:checked { background: #0b62b8; border-color: #0b62b8; position: relative; }
input[type="checkbox"]:checked::after { content: ""; position: absolute; left: 1px; top: 0; width: 4px; height: 3px; border: solid #fff; border-width: 0 0 1px 1px; transform: rotate(-45deg); }
.status {
  display: grid;
  grid-template-columns: 35px 48px 47px 47px 47px 89px 57px 41px 41px 27px 55px 42px 50px 31px 1fr;
  height: 12px;
  flex: none;
  border-top: 1px solid #d4d8e0;
  border-bottom: 1px solid #77737f;
  text-align: center;
  line-height: 10px;
  white-space: nowrap;
}
.status > * { border-right: 1px solid #d0d3da; }
.status b { background: #cbd5ef; color: #111; border-color: #cbd5ef; }
.status .def { text-align: left; padding-left: 2px; }
.def .sw { margin-right: 1px; vertical-align: middle; }
.status .last { text-align: left; border: 0; padding-left: 1px; }
.cp { position: relative; }
.mic { position: absolute; left: 8px; top: 0; width: 14px; height: 11px; }

.dialog {
  position: absolute;
  left: 246px;
  top: 93px;
  width: 532px;
  height: 335px;
  padding: 0 4px 3px 3px;
  display: flex;
  flex-direction: column;
  background: #f2f2f2;
  border: 1px solid #bbb;
  border-radius: 5px;
  box-shadow: 0 6px 18px #0008, 0 0 5px #0004;
  color: #111;
  font-family: "Noto Sans", sans-serif;
  font-size: 6px;
}
.dialog header { display: flex; align-items: center; height: 13px; gap: 3px; padding-left: 3px; }
.logo { width: 8px; height: 8px; }
.dialog h1 { flex: 1; }
.x { background: none; width: 7px; height: 8px; display: flex; align-items: center; }
.x svg { width: 7px; height: 7px; }
.search { display: flex; align-items: center; height: 12px; margin: 6px 0; padding-left: 2px; }
.search label { width: 12px; }
.search label svg { width: 9px; height: 9px; display: block; }
.search > input { flex: 1; height: 12px; border: 1px solid #ccc; padding-left: 2px; margin-right: 3px; }
.combo { width: 87px; position: relative; margin-right: 3px; }
.combo select { appearance: none; display: block; width: 100%; height: 12px; background: #e7e7e7; border: 1px solid #bbb; padding-left: 4px; font-family: "Liberation Sans", sans-serif; font-size: 7px; }
.combo::after { content: ""; position: absolute; right: 3px; top: 5px; border: 2px solid transparent; border-top: 3px solid #999; }
.open { width: 14px; height: 12px; background: #ddd; border: 1px solid #999; padding: 1px 2px; }
.open svg { width: 8px; height: 8px; display: block; }
.list { flex: 1; background: #fff; border: 1px solid #a9c0d6; }
.list table { width: 100%; table-layout: fixed; }
.c1 { width: 11px; }
.c2 { width: 160px; }
.c3 { width: 48px; }
.c4 { width: 59px; }
.c5 { width: 32px; }
.c6 { width: 74px; }
.list th { height: 12px; padding: 0 2px; text-align: left; font-weight: normal; background: #fafbfd; border-right: 1px solid #e3e6ea; border-bottom: 1px solid #e3e6ea; overflow: hidden; white-space: nowrap; }
.list td { height: 12px; padding: 0 1px; white-space: nowrap; }
.sel { background: #efefef; }
.sel .blank { background: #fff; }
.star { width: 8px; height: 8px; display: block; }
.actions { display: flex; justify-content: flex-end; gap: 6px; padding: 5px 1px 0; height: 17px; }
.actions button { width: 39px; height: 11px; border-radius: 6px; background: #ddd; }
.actions .go { background: #3399ff; color: #fff; }
.mark { position: absolute; left: -8px; top: 8px; width: 80px; height: 42px; }
```
